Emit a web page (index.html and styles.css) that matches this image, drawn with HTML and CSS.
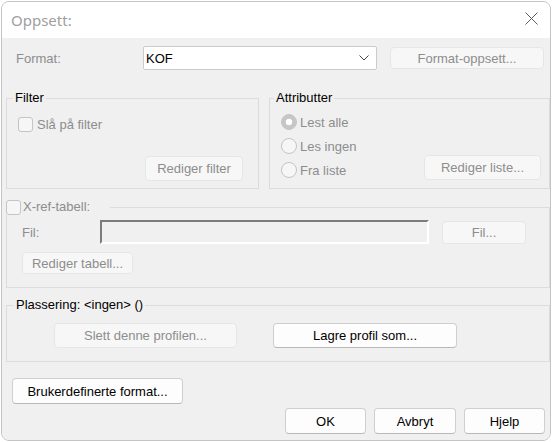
FILE: index.html
```html
<!DOCTYPE html>
<html lang="no">
<head>
<meta charset="utf-8">
<title>Oppsett</title>
<link rel="stylesheet" href="styles.css">
</head>
<body>
<div class="window">
  <div class="titlebar">
    <span class="title">Oppsett:</span>
    <svg class="close" width="13" height="13" viewBox="0 0 13 13"><path d="M0.5 0.5 L12.5 12.5 M12.5 0.5 L0.5 12.5" stroke="#5c5c5c" stroke-width="1" fill="none"/></svg>
  </div>
  <div class="content">
    <div class="row-format">
      <span class="lbl-format dis">Format:</span>
      <div class="combo"><span>KOF</span>
        <svg class="chev" width="10" height="6" viewBox="0 0 10 6"><path d="M0.5 0.5 L5 5 L9.5 0.5" stroke="#444" stroke-width="1" fill="none"/></svg>
      </div>
      <div class="btn disabled btn-fmt">Format-oppsett...</div>
    </div>

    <div class="row-groups">
      <div class="group g-filter">
        <span class="gtitle">Filter</span>
        <div class="chkrow"><span class="chk"></span><span class="dis">Slå på filter</span></div>
        <div class="btnrow-right"><div class="btn disabled btn-rf">Rediger filter</div></div>
      </div>
      <div class="group g-attr">
        <span class="gtitle">Attributter</span>
        <div class="attr-body">
          <div class="radios">
            <div class="radrow"><span class="rad checked"></span><span class="dis">Lest alle</span></div>
            <div class="radrow"><span class="rad"></span><span class="dis">Les ingen</span></div>
            <div class="radrow"><span class="rad"></span><span class="dis">Fra liste</span></div>
          </div>
          <div class="btn disabled btn-rl">Rediger liste...</div>
        </div>
      </div>
    </div>

    <div class="group g-xref">
      <span class="gtitle xtitle"><span class="chk"></span><span class="dis">X-ref-tabell:</span></span>
      <div class="filrow">
        <span class="lbl-fil dis">Fil:</span>
        <div class="sunken"></div>
        <div class="btn disabled btn-fil">Fil...</div>
      </div>
      <div class="btn disabled btn-rt">Rediger tabell...</div>
    </div>

    <div class="group g-plass">
      <span class="gtitle">Plassering: &lt;ingen&gt; ()</span>
      <div class="plassrow">
        <div class="btn disabled btn-slett">Slett denne profilen...</div>
        <div class="btn btn-lagre">Lagre profil som...</div>
      </div>
    </div>

    <div class="btn btn-bruker">Brukerdefinerte format...</div>

    <div class="footer">
      <div class="btn btn-foot">OK</div>
      <div class="btn btn-foot btn-avbryt">Avbryt</div>
      <div class="btn btn-foot">Hjelp</div>
    </div>
  </div>
</div>
</body>
</html>
```

FILE: styles.css
```css
* { box-sizing: border-box; }
html, body { margin: 0; padding: 0; background: #ffffff; }
body {
  font-family: "Liberation Sans", Arial, sans-serif;
  font-size: 13px;
  color: #000;
  width: 552px;
  height: 442px;
  overflow: hidden;
}
.window {
  margin: 1px 0 0 1px;
  width: 550px;
  height: 440px;
  border: 1px solid #c4c4c4;
  border-radius: 8px;
  overflow: hidden;
  background: #f0f0f0;
}
.titlebar {
  height: 36px;
  background: #ffffff;
  display: flex;
  align-items: center;
  justify-content: space-between;
  padding: 0 12px 0 9px;
}
.title {
  font-family: "Noto Sans", "Open Sans", sans-serif;
  font-size: 15px;
  color: #a0a0a0;
  margin-top: -1px;
}
.close { display: block; margin-top: -3px; }
.content { background: #f0f0f0; height: 402px; padding-top: 8px; }
.dis { color: #8d8d8d; }

.btn {
  display: flex;
  align-items: center;
  justify-content: center;
  border: 1px solid #cfcfcf;
  border-bottom-color: #b9b9b9;
  border-radius: 4px;
  background: #fdfdfd;
  color: #000;
  white-space: nowrap;
}
.btn.disabled {
  background: #f7f7f7;
  border-color: #e6e6e6;
  color: #8d8d8d;
}

.row-format { display: flex; align-items: center; height: 24px; margin-left: 14px; }
.lbl-format { width: 127px; }
.combo {
  width: 234px; height: 24px;
  background: #fff;
  border: 1px solid #cbcbcb;
  border-radius: 2px;
  display: flex; align-items: center; justify-content: space-between;
  padding: 0 7px 0 2px;
}
.chev { display: block; }
.btn-fmt { margin-left: 13px; width: 154px; height: 22px; }

.row-groups { display: flex; margin-top: 28px; margin-left: 4px; }
.group { border: 1px solid #dcdcdc; }
.gtitle {
  display: block;
  width: fit-content;
  line-height: 16px;
  height: 16px;
  margin-top: -9px;
  padding: 0 2px;
  background: #f0f0f0;
}
.g-filter { width: 253px; height: 91px; }
.g-filter .gtitle { margin-left: 6px; }
.chkrow { display: flex; align-items: center; margin: 10px 0 0 11px; height: 16px; }
.chk {
  width: 15px; height: 15px;
  border: 1px solid #c4c4c4;
  border-radius: 3px;
  background: #f6f6f6;
  margin-right: 4px;
  flex: none;
}
.btnrow-right { display: flex; justify-content: flex-end; margin-top: 24px; padding-right: 15px; }
.btn-rf { width: 98px; height: 25px; }

.g-attr { width: 281px; height: 91px; margin-left: 10px; }
.g-attr .gtitle { margin-left: 4px; }
.attr-body { display: flex; justify-content: space-between; align-items: flex-end; padding: 4px 8px 0 11px; }
.radios { display: flex; flex-direction: column; }
.radrow { display: flex; align-items: center; height: 24px; }
.rad {
  width: 16px; height: 16px;
  border: 1px solid #c4c4c4;
  border-radius: 50%;
  background: #f6f6f6;
  margin-right: 3px;
  flex: none;
}
.rad.checked {
  background: #c6c6c6;
  border-color: #c6c6c6;
  background-image: radial-gradient(circle, #ffffff 0 3px, transparent 3.6px);
}
.btn-rl { width: 117px; height: 25px; margin-bottom: 2px; }

.g-xref { width: 544px; height: 81px; margin: 18px 0 0 4px; }
.xtitle { display: flex; align-items: center; margin-left: -1px; padding: 0; width: 104px; }
.xtitle .chk { margin-right: 2px; }
.filrow { display: flex; align-items: center; height: 24px; margin: 5px 0 0 15px; }
.lbl-fil { width: 78px; }
.sunken {
  width: 329px; height: 24px;
  background: #f0f0f0;
  border-top: 2px solid #7c7c7c;
  border-left: 2px solid #7c7c7c;
  border-bottom: 2px solid #ffffff;
  border-right: 2px solid #ffffff;
}
.btn-fil { width: 84px; height: 23px; margin-left: 13px; }
.btn-rt { width: 111px; height: 22px; margin: 8px 0 0 15px; }

.g-plass { width: 544px; height: 57px; margin: 17px 0 0 4px; }
.g-plass .gtitle { margin-left: 7px; }
.plassrow { display: flex; margin: 10px 0 0 47px; }
.btn-slett { width: 183px; height: 25px; }
.btn-lagre { width: 184px; height: 25px; margin-left: 36px; }

.btn-bruker { width: 171px; height: 26px; margin: 16px 0 0 10px; }
.footer { display: flex; justify-content: flex-end; gap: 8px; margin-top: 4px; padding-right: 5px; }
.btn-foot { width: 81px; height: 26px; }
.btn-avbryt { width: 82px; }
```
